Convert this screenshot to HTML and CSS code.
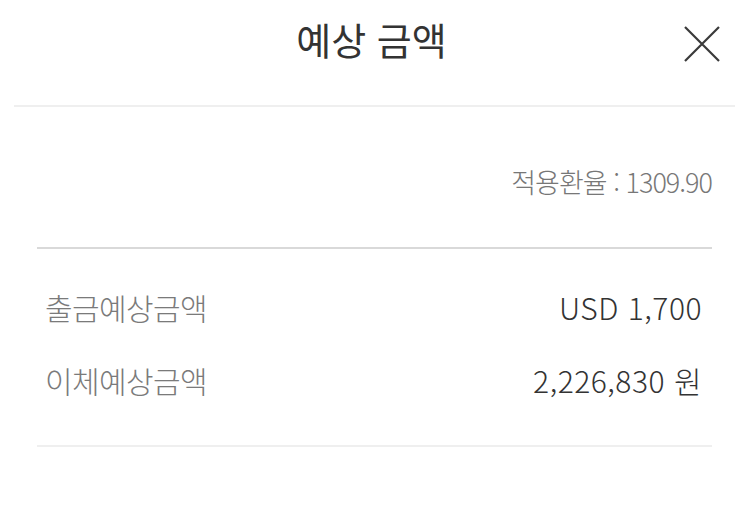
FILE: index.html
```html
<!DOCTYPE html>
<html lang="ko">
<head>
<meta charset="utf-8">
<link rel="stylesheet" href="styles.css">
</head>
<body>
<div class="sheet">
  <header class="head">
    <h1 class="title">예상 금액</h1>
    <button class="close" aria-label="닫기">
      <svg width="38" height="38" viewBox="0 0 38 38"><path d="M2 2 L36 36 M36 2 L2 36" stroke="#3a3a3a" stroke-width="2.2" fill="none"/></svg>
    </button>
  </header>
  <div class="body">
    <div class="rate">적용환율 : 1309.90</div>
    <div class="rows">
      <div class="row"><span class="label">출금예상금액</span><span class="value">USD 1,700</span></div>
      <div class="row"><span class="label">이체예상금액</span><span class="value">2,226,830 원</span></div>
    </div>
  </div>
</div>
</body>
</html>
```
FILE: styles.css
```css
* { box-sizing: border-box; }
html, body { margin: 0; padding: 0; background: #fff; }
body { font-family: "Noto Sans CJK KR", "Noto Sans", sans-serif; width: 743px; height: 510px; overflow: hidden; }
.head {
  position: relative;
  height: 107px;
  margin: 0 8px 0 14px;
  border-bottom: 2px solid #efefef;
  display: flex;
  justify-content: center;
}
.title {
  margin: 0;
  padding-top: 12px;
  font-size: 38px;
  font-weight: 400;
  color: #333;
  line-height: 54px;
  margin-left: -6px;
}
.close {
  position: absolute;
  right: 14px;
  top: 25px;
  background: none;
  border: 0;
  padding: 0;
  width: 38px;
  height: 38px;
}
.close svg { display: block; }
.body { padding: 0 31px 0 37px; }
.rate {
  text-align: right;
  font-size: 27px;
  font-weight: 300;
  color: #777;
  letter-spacing: -1px;
  line-height: 36px;
  padding-top: 57px;
  padding-bottom: 47px;
  border-bottom: 2px solid #d9d9d9;
}
.rows {
  padding: 21px 10px 29px 8px;
  border-bottom: 2px solid #efefef;
}
.row {
  display: flex;
  justify-content: space-between;
  align-items: center;
  height: 73px;
  font-size: 30px;
  font-weight: 300;
}
.label { color: #7a7a7a; letter-spacing: -0.6px; }
.value { color: #333; letter-spacing: 0.5px; }
```
